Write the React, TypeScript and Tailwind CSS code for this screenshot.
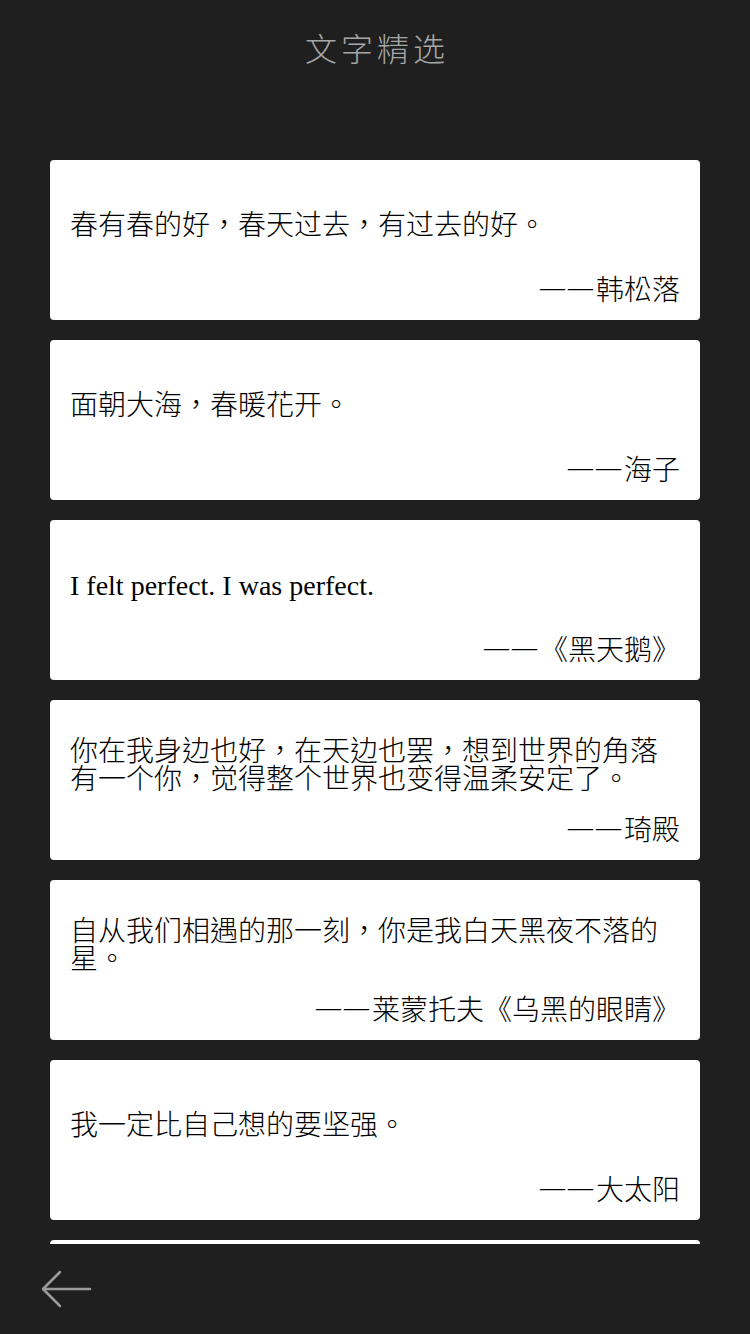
import { type FC } from "react";

interface Quote {
	text: string;
	author: string;
}

const quotes: Quote[] = [
	{ text: "春有春的好，春天过去，有过去的好。", author: "韩松落" },
	{ text: "面朝大海，春暖花开。", author: "海子" },
	{ text: "I felt perfect. I was perfect.", author: "《黑天鹅》" },
	{
		text: "你在我身边也好，在天边也罢，想到世界的角落有一个你，觉得整个世界也变得温柔安定了。",
		author: "琦殿",
	},
	{ text: "自从我们相遇的那一刻，你是我白天黑夜不落的星。", author: "莱蒙托夫《乌黑的眼睛》" },
	{ text: "我一定比自己想的要坚强。", author: "大太阳" },
	{ text: "", author: "" },
];

const serifStack = '"Liberation Serif", "Noto Sans CJK TC", serif';
const cjkStack = '"Noto Sans CJK TC", "Noto Sans CJK SC", sans-serif';

const QuoteCard: FC<{ quote: Quote }> = ({ quote }) => (
	<div className="flex h-[160px] w-[650px] shrink-0 flex-col rounded-[4px] bg-white px-[20px] pt-[18px] pb-[18px] text-black">
		<div className="flex flex-1 items-center">
			<p className="text-[28px] font-light leading-[28px]" style={{ fontFamily: serifStack }}>
				{quote.text}
			</p>
		</div>
		<div
			className="flex h-[28px] shrink-0 items-center justify-end text-[28px] font-light leading-[28px]"
			style={{ fontFamily: cjkStack }}
		>
			{quote.author && (
				<>
					<span
						className="text-[25px] leading-[28px] tracking-[3px]"
						style={{ fontFamily: '"Liberation Serif", serif' }}
					>
						——
					</span>
					<span>{quote.author}</span>
				</>
			)}
		</div>
	</div>
);

export default function App() {
	return (
		<div className="flex h-[1334px] w-[750px] flex-col bg-[#1f1f1f]">
			<header className="flex h-[94px] shrink-0 items-center justify-center">
				<h1
					className="pl-[4px] text-[32px] font-light tracking-[4px] text-[#a6a6a6]"
					style={{ fontFamily: cjkStack }}
				>
					文字精选
				</h1>
			</header>

			<main className="flex flex-1 flex-col items-center gap-[20px] overflow-hidden pt-[66px]">
				{quotes.map((q, i) => (
					<QuoteCard key={i} quote={q} />
				))}
			</main>

			<footer className="flex h-[90px] shrink-0 items-center px-[40px]">
				<svg width="52" height="38" viewBox="0 0 52 38" fill="none">
					<path
						d="M20 2 L3 19 L20 36 M3 19 L50 19"
						stroke="#9b9b9b"
						strokeWidth="2.5"
						strokeLinecap="round"
						strokeLinejoin="round"
					/>
				</svg>
			</footer>
		</div>
	);
}
